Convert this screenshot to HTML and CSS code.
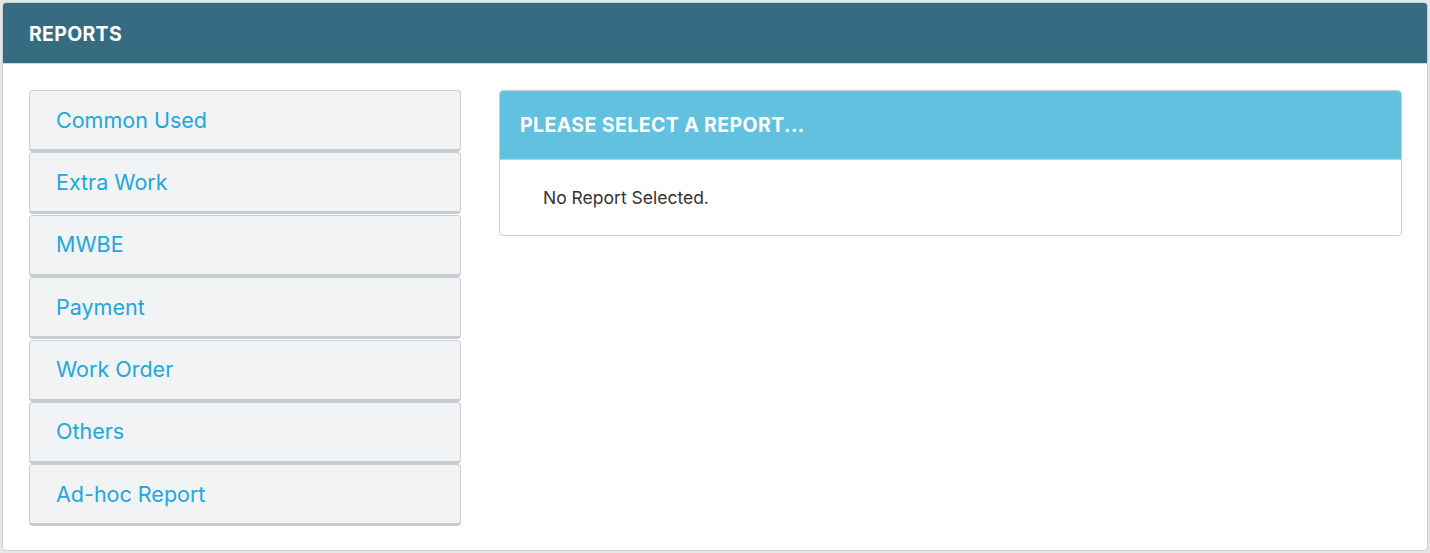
FILE: index.html
```html
<!DOCTYPE html>
<html>
<head>
<meta charset="utf-8">
<link rel="stylesheet" href="styles.css">
</head>
<body>
<div class="panel">
  <div class="panel-head">REPORTS</div>
  <div class="panel-body">
    <div class="menu">
      <a class="menu-item">Common Used</a>
      <a class="menu-item">Extra Work</a>
      <a class="menu-item">MWBE</a>
      <a class="menu-item">Payment</a>
      <a class="menu-item">Work Order</a>
      <a class="menu-item">Others</a>
      <a class="menu-item">Ad-hoc Report</a>
    </div>
    <div class="report">
      <div class="report-head">PLEASE SELECT A REPORT...</div>
      <div class="report-body">No Report Selected.</div>
    </div>
  </div>
</div>
</body>
</html>
```
FILE: styles.css
```css
html, body {
  margin: 0;
  padding: 0;
  background: #e4e6e8;
  font-family: Inter, "Open Sans", "Liberation Sans", sans-serif;
}
.panel {
  margin: 2px 2px 0 2px;
  width: 1426px;
  height: 549px;
  box-sizing: border-box;
  background: #fff;
  border: 1px solid #cdd0d3;
  border-radius: 4px;
  overflow: hidden;
}
.panel-head {
  height: 61px;
  box-sizing: border-box;
  background: #366b82;
  color: #fff;
  font-weight: 700;
  font-size: 19.5px;
  letter-spacing: 0.3px;
  padding-left: 26px;
  padding-top: 2px;
  display: flex;
  align-items: center;
  border-bottom: 1px solid #d5d8db;
}
.panel-body {
  display: flex;
  align-items: flex-start;
  gap: 38px;
  padding: 26px 25px 0 26px;
}
.menu {
  width: 432px;
  flex: none;
  display: flex;
  flex-direction: column;
  gap: 0.4px;
}
.menu-item {
  height: 62px;
  box-sizing: border-box;
  background: #f2f3f5;
  border: 1px solid #cbced2;
  border-bottom: 3px solid #c8cbcf;
  border-radius: 4px;
  color: #22a7dc;
  font-size: 21.5px;
  padding-left: 26px;
  display: flex;
  align-items: center;
  padding-bottom: 1px;
}
.report {
  flex: 1;
  border: 1px solid #cbced2;
  border-radius: 4px;
  overflow: hidden;
}
.report-head {
  height: 69px;
  box-sizing: border-box;
  background: #62c1df;
  color: #fff;
  font-weight: 700;
  font-size: 19.5px;
  letter-spacing: 0.4px;
  padding-left: 20px;
  display: flex;
  align-items: center;
  border-bottom: 1px solid #cbced2;
}
.report-body {
  height: 75px;
  box-sizing: border-box;
  padding-left: 43px;
  display: flex;
  align-items: center;
  font-size: 17.5px;
  color: #333;
  padding-bottom: 1px;
}
```
